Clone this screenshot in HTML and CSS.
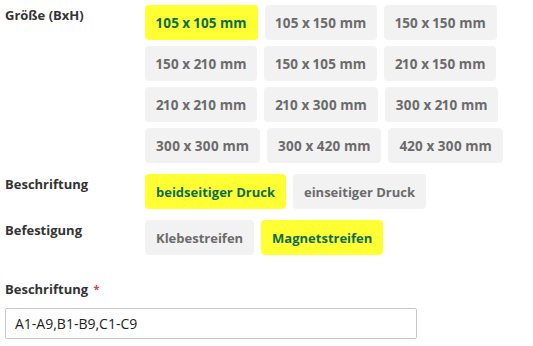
FILE: index.html
```html
<!DOCTYPE html>
<html lang="de">
<head>
<meta charset="utf-8">
<link rel="stylesheet" href="styles.css">
</head>
<body>
<div class="form">
  <div class="group">
    <div class="label">Größe (BxH)</div>
    <div class="options sizes">
      <span class="opt active">105 x 105 mm</span>
      <span class="opt">105 x 150 mm</span>
      <span class="opt">150 x 150 mm</span>
      <span class="opt">150 x 210 mm</span>
      <span class="opt">150 x 105 mm</span>
      <span class="opt">210 x 150 mm</span>
      <span class="opt">210 x 210 mm</span>
      <span class="opt">210 x 300 mm</span>
      <span class="opt">300 x 210 mm</span>
      <span class="opt">300 x 300 mm</span>
      <span class="opt">300 x 420 mm</span>
      <span class="opt">420 x 300 mm</span>
    </div>
  </div>
  <div class="group">
    <div class="label">Beschriftung</div>
    <div class="options">
      <span class="opt active">beidseitiger Druck</span>
      <span class="opt">einseitiger Druck</span>
    </div>
  </div>
  <div class="group">
    <div class="label">Befestigung</div>
    <div class="options">
      <span class="opt">Klebestreifen</span>
      <span class="opt active">Magnetstreifen</span>
    </div>
  </div>
  <div class="field">
    <div class="field-label">Beschriftung <span class="req">*</span></div>
    <div class="input">A1-A9,B1-B9,C1-C9</div>
  </div>
</div>
</body>
</html>
```
FILE: styles.css
```css
html, body {
  margin: 0;
  padding: 0;
  background: #ffffff;
}
body {
  font-family: "Open Sans", "Noto Sans", sans-serif;
  color: #333333;
}
.form {
  padding: 5px;
  display: flex;
  flex-direction: column;
  gap: 11px;
}
.group {
  display: grid;
  grid-template-columns: 140px 1fr;
  align-items: start;
}
.label {
  font-size: 13px;
  font-weight: 700;
  line-height: 18px;
  padding-top: 1px;
  color: #333333;
}
.options {
  display: flex;
  flex-wrap: wrap;
  gap: 6px 7px;
}
.opt {
  display: inline-flex;
  align-items: center;
  height: 35px;
  padding: 0 11px;
  border-radius: 4px;
  background: #f2f2f2;
  color: #6b6b6b;
  font-size: 13px;
  font-weight: 700;
  font-variant-numeric: proportional-nums;
  white-space: nowrap;
}
.sizes .opt {
  font-size: 13.5px;
}
.opt.active {
  background: #ffff33;
  color: #0b6e4f;
}
.field {
  margin-top: 14px;
}
.field-label {
  font-size: 13px;
  font-weight: 700;
  line-height: 18px;
  color: #333333;
}
.req {
  color: #e0403a;
  font-size: 11px;
  vertical-align: top;
  margin-left: 2px;
}
.input {
  margin-top: 10px;
  width: 412px;
  height: 31px;
  box-sizing: border-box;
  border: 1px solid #c8c8c8;
  border-radius: 2px;
  padding: 0 9px;
  display: flex;
  align-items: center;
  font-size: 14px;
  color: #222222;
}
```
